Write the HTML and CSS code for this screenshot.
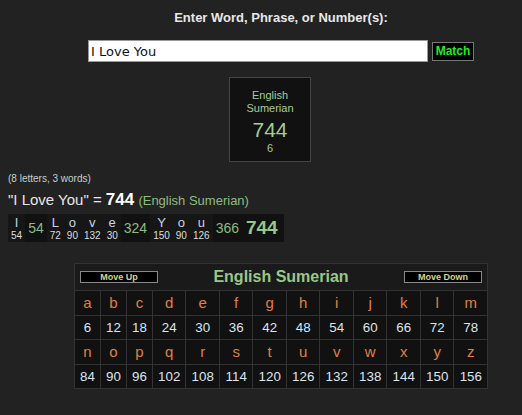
FILE: index.html
```html
<!DOCTYPE html>
<html>
<head>
<meta charset="utf-8">
<link rel="stylesheet" href="styles.css">
</head>
<body>
<div class="top">
  <div class="heading">Enter Word, Phrase, or Number(s):</div>
  <div class="form">
    <input class="query" type="text" value="I Love You">
    <button class="match">Match</button>
  </div>
  <div class="boxrow">
    <div class="result">
      <div class="rname">English<br>Sumerian</div>
      <div class="rval">744</div>
      <div class="rsub">6</div>
    </div>
  </div>
</div>
<div class="summary">
  <div class="counts">(8 letters, 3 words)</div>
  <div class="phrase">"I Love You" = <b class="total">744</b> <span class="cipher">(English Sumerian)</span></div>
  <table class="breakdown">
    <tr>
      <td class="lt"><div class="ch">I</div><div class="nv">54</div></td>
      <td class="ws">54</td>
      <td class="lt"><div class="ch">L</div><div class="nv">72</div></td>
      <td class="lt"><div class="ch">o</div><div class="nv">90</div></td>
      <td class="lt"><div class="ch">v</div><div class="nv">132</div></td>
      <td class="lt"><div class="ch">e</div><div class="nv">30</div></td>
      <td class="ws">324</td>
      <td class="lt"><div class="ch">Y</div><div class="nv">150</div></td>
      <td class="lt"><div class="ch">o</div><div class="nv">90</div></td>
      <td class="lt"><div class="ch">u</div><div class="nv">126</div></td>
      <td class="ws">366</td>
      <td class="gt">744</td>
    </tr>
  </table>
</div>
<div class="chartwrap">
  <table class="chart">
    <colgroup>
      <col class="c2"><col class="c2"><col class="c2">
      <col class="c3"><col class="c3"><col class="c3"><col class="c3"><col class="c3">
      <col class="c3"><col class="c3"><col class="c3"><col class="c3"><col class="c3">
    </colgroup>
    <tr>
      <th class="chead" colspan="13">
        <div class="headbar">
          <button class="mv">Move Up</button>
          <span class="ctitle">English Sumerian</span>
          <button class="mv">Move Down</button>
        </div>
      </th>
    </tr>
    <tr class="letters"><td>a</td><td>b</td><td>c</td><td>d</td><td>e</td><td>f</td><td>g</td><td>h</td><td>i</td><td>j</td><td>k</td><td>l</td><td>m</td></tr>
    <tr class="nums"><td>6</td><td>12</td><td>18</td><td>24</td><td>30</td><td>36</td><td>42</td><td>48</td><td>54</td><td>60</td><td>66</td><td>72</td><td>78</td></tr>
    <tr class="letters"><td>n</td><td>o</td><td>p</td><td>q</td><td>r</td><td>s</td><td>t</td><td>u</td><td>v</td><td>w</td><td>x</td><td>y</td><td>z</td></tr>
    <tr class="nums"><td>84</td><td>90</td><td>96</td><td>102</td><td>108</td><td>114</td><td>120</td><td>126</td><td>132</td><td>138</td><td>144</td><td>150</td><td>156</td></tr>
  </table>
</div>
</body>
</html>
```
FILE: styles.css
```css
html, body {
  margin: 0;
  padding: 0;
  background: #222222;
  font-family: "Liberation Sans", Arial, sans-serif;
  color: #dddddd;
}
.top {
  padding-left: 40px;
  padding-top: 10px;
  text-align: center;
}
.heading {
  font-size: 13px;
  font-weight: bold;
  line-height: 15px;
  color: #e8e8e8;
}
.form {
  margin-top: 15px;
  display: flex;
  justify-content: center;
  align-items: center;
  gap: 4px;
  height: 22px;
}
.query {
  box-sizing: border-box;
  width: 340px;
  height: 22px;
  margin: 0;
  padding: 0 2px;
  border: 1px solid #999;
  background: #fff;
  color: #111;
  font-family: "DejaVu Sans", Verdana, sans-serif;
  font-size: 13px;
}
.match {
  box-sizing: border-box;
  width: 42px;
  height: 19px;
  margin: 0;
  padding: 0;
  border: 1px solid #777;
  background: #000;
  color: #22ee22;
  font-family: "Liberation Sans", Arial, sans-serif;
  font-weight: bold;
  font-size: 12px;
}
.boxrow {
  margin-top: 15px;
  display: flex;
  justify-content: center;
  padding-right: 22px;
}
.result {
  box-sizing: border-box;
  width: 82px;
  height: 85px;
  background: #111111;
  border: 1px solid #444;
  color: #a8cc90;
  padding-top: 11px;
}
.rname {
  font-size: 11px;
  line-height: 13px;
}
.rval {
  font-size: 21px;
  line-height: 24px;
  margin-top: 3px;
}
.rsub {
  font-size: 11px;
  line-height: 12px;
}
.summary {
  padding-left: 8px;
  margin-top: 11px;
}
.counts {
  font-size: 10px;
  line-height: 12px;
  color: #cccccc;
}
.phrase {
  margin-top: 6px;
  font-size: 15px;
  line-height: 18px;
  color: #e8e8e8;
}
.total {
  font-size: 17px;
  color: #ffffff;
}
.cipher {
  font-size: 13px;
  color: #90bb80;
}
.breakdown {
  margin-top: 4px;
  border-collapse: collapse;
  background: #111111;
}
.breakdown td {
  padding: 0 3px;
  text-align: center;
  vertical-align: middle;
  height: 28px;
}
.lt {
  background: #161616;
}
.ch {
  font-size: 13px;
  line-height: 15px;
  color: #c8d4e4;
}
.nv {
  font-size: 10px;
  line-height: 12px;
  color: #dddddd;
}
.ws {
  font-size: 14px;
  color: #90bb80;
}
.breakdown td.gt {
  font-size: 19px;
  font-weight: bold;
  color: #98c888;
  padding: 0 6px 0 4px;
}
.chartwrap {
  padding-left: 40px;
  margin-top: 21px;
  display: flex;
  justify-content: center;
}
.chart {
  table-layout: fixed;
  width: 413px;
  border-collapse: collapse;
  background: #111111;
  border: 1px solid #333;
}
.c2 {
  width: 26px;
}
.c3 {
  width: 33.5px;
}
.chead {
  background: #1a1a1a;
  height: 26px;
  padding: 0 5px;
  border: 1px solid #333;
}
.headbar {
  display: flex;
  justify-content: space-between;
  align-items: center;
}
.mv {
  box-sizing: border-box;
  width: 78px;
  height: 12px;
  margin: 0;
  padding: 0;
  border: 1px solid #888;
  background: #000;
  color: #d4d488;
  font-family: "Liberation Sans", Arial, sans-serif;
  font-size: 9px;
  font-weight: bold;
  line-height: 10px;
}
.ctitle {
  font-size: 16px;
  font-weight: bold;
  color: #98c888;
}
.chart td {
  border: 1px solid #333;
  height: 23.5px;
  padding: 0;
  text-align: center;
}
.letters td {
  font-size: 15px;
  color: #e08040;
}
.nums td {
  font-size: 13.33px;
  color: #dde4ee;
}
```
